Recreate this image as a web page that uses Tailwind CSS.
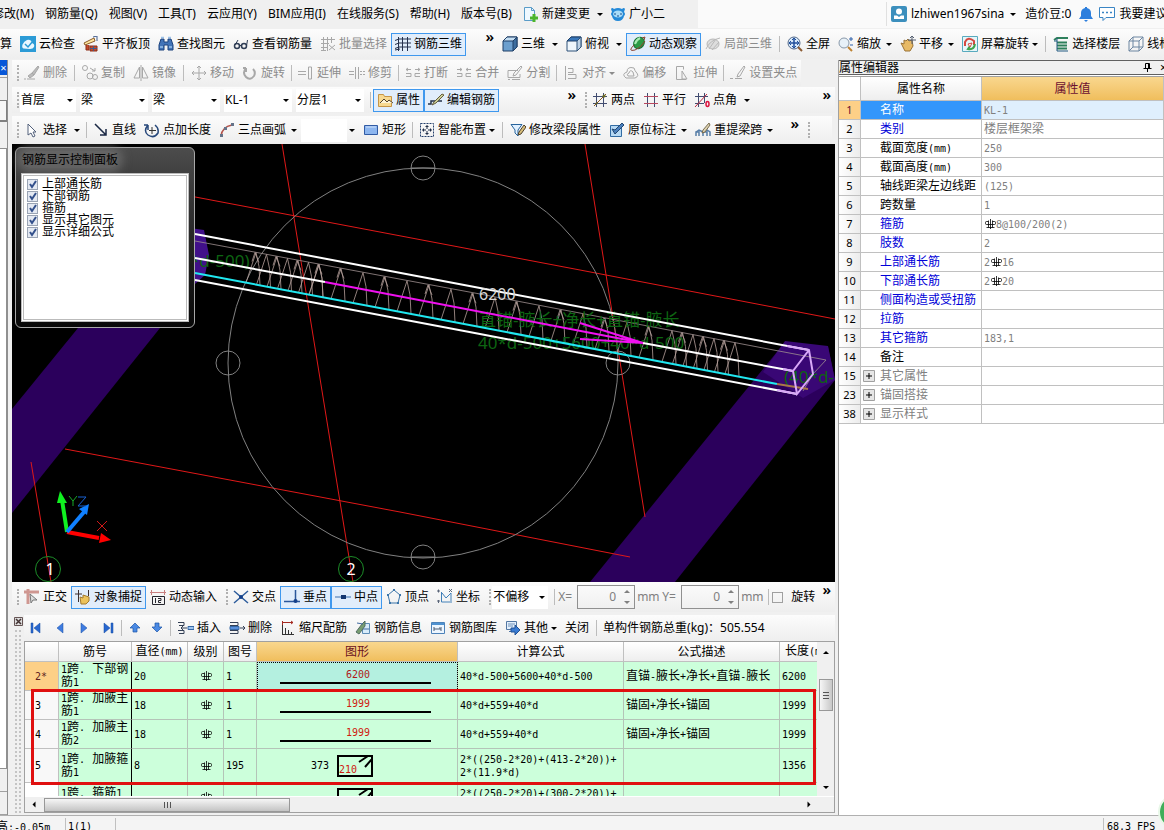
<!DOCTYPE html>
<html lang="zh-CN">
<head>
    <meta charset="UTF-8">
    <meta name="viewport" content="width=device-width, initial-scale=1.0">
    <title>钢筋三维</title>
    <script src="https://cdn.jsdelivr.net/npm/@tailwindcss/browser@4"></script>
</head>
<!-- Shared toolbar look: buttons, arrows (i), separators (hr), grips (s) and overflow marks (b) -->
<body class="h-screen flex flex-col overflow-hidden bg-[#f0f0f0] text-black text-[12px] leading-4 whitespace-nowrap font-['Noto_Sans','Noto_Sans_CJK_SC',sans-serif]
    [&_[role=toolbar]]:flex [&_[role=toolbar]]:items-center [&_[role=toolbar]]:shrink-0 [&_[role=toolbar]]:overflow-hidden [&_[role=toolbar]]:bg-linear-to-b [&_[role=toolbar]]:from-[#fcfcfc] [&_[role=toolbar]]:to-[#eeeeee]
    [&_[role=toolbar]>*]:shrink-0
    [&_[role=toolbar]_button]:flex [&_[role=toolbar]_button]:items-center [&_[role=toolbar]_button]:gap-[3px] [&_[role=toolbar]_button]:h-[23px] [&_[role=toolbar]_button]:px-[3px] [&_[role=toolbar]_button]:border [&_[role=toolbar]_button]:border-transparent
    [&_[role=toolbar]_button[aria-pressed=true]]:border-[#3f98ee] [&_[role=toolbar]_button[aria-pressed=true]]:bg-[#e1edfb]
    [&_[role=toolbar]_button:disabled]:text-[#8c8c8c]
    [&_[role=toolbar]_button_svg]:size-4 [&_[role=toolbar]_button_svg]:shrink-0 [&_[role=toolbar]_button_svg]:fill-none [&_[role=toolbar]_button_svg]:stroke-current
    [&_i]:border-x-[3px] [&_i]:border-x-transparent [&_i]:border-t-[3px] [&_i]:border-t-current
    [&_hr]:h-4 [&_hr]:w-px [&_hr]:mx-[3px] [&_hr]:border-0 [&_hr]:bg-[#bcbcbc]
    [&_s]:h-4 [&_s]:ml-[5px] [&_s]:mr-px [&_s]:border-l-2 [&_s]:border-dotted [&_s]:border-[#b0b0b0]
    [&_b]:ml-auto [&_b]:mr-1 [&_b]:self-start [&_b]:text-[15px] [&_b]:leading-[15px] [&_b]:font-semibold">

    <svg class="hidden">
        <symbol id="rebar" viewBox="0 0 12 12"><path d="M6.500 1v10M2.500 9.500h8M4.500 2.500v7M8.500 2.500v7M4.500 3.500h-2q-1 0-1 1v1q0 1 1 1h8q1 0 1-1v-1q0-1-1-1h-2" fill="none" stroke="currentColor" stroke-width=".8"/></symbol>
        <symbol id="plus" viewBox="0 0 12 12"><path d="M.5.5h11v11H.5z" fill="#e6e6e6" stroke="#a0a0a0"/><path d="M3 6h6M6 3v6" stroke="#000"/></symbol>
    </svg>

    <!-- Menu bar -->
    <header class="flex h-7 shrink-0 items-center">
        <nav class="flex w-[706px] h-full shrink-0 items-center gap-[11px] -ml-2 [&_button]:shrink-0">
            <button>修改(M)</button>
            <button>钢筋量(Q)</button>
            <button>视图(V)</button>
            <button>工具(T)</button>
            <button>云应用(Y)</button>
            <button>BIM应用(I)</button>
            <button>在线服务(S)</button>
            <button>帮助(H)</button>
            <button>版本号(B)</button>
            <button class="flex items-center gap-[3px]">
                <svg class="size-4" viewBox="0 0 16 16"><path d="M1.500 1.500h7l3 3v10h-10z" fill="#eef8ff" stroke="#5a9cc8"/><path d="M8.500 1.500v3h3" fill="none" stroke="#5a9cc8"/><path d="M9.500 8h3v2.500H15v3h-2.500V16h-3v-2.500H7v-3h2.500z" fill="#4cb52c"/></svg>
                新建变更 <i class="ml-1"></i>
            </button>
            <button class="flex items-center gap-[3px] -ml-1">
                <svg class="size-4" viewBox="0 0 16 16"><path d="M1 3q1-2 3 0 4-2 8 0 2-2 3 0l-1 3q2 2 0 4-1 5-6 5T2 10Q0 8 2 6z" fill="#2389d8"/><ellipse cx="8" cy="8" rx="5" ry="3.500" fill="#a7dbf8"/><path d="M5 7v2M11 7v2M7 10h2" stroke="#164d8c"/></svg>
                广小二
            </button>
        </nav>
        <div class="flex flex-1 h-full items-center bg-[#fafafa] pl-[188px] [&>*]:shrink-0">
            <span class="h-6 w-px bg-[#e0e0e0]"></span>
            <button class="flex items-center gap-1 ml-1">
                <svg class="size-4" viewBox="0 0 16 16"><rect width="16" height="16" rx="2" fill="#3c8fbd"/><circle cx="8" cy="5.500" r="3" fill="#fff"/><path d="M3 13V9.500h3l2 1.500 2-1.500h3V13z" fill="#fff"/></svg>
                lzhiwen1967sina <i class="ml-[2px]"></i>
            </button>
            <span class="ml-[9px]">造价豆:0</span>
            <button aria-label="通知" class="ml-[7px]"><svg class="size-4" viewBox="0 0 16 16"><path d="M7 1h2v1q4 1 4 5v3l2 3H1l2-3V7q0-4 4-5zM6 14h4l-2 2z" fill="#2d7fdd"/></svg></button>
            <button class="flex items-center gap-1 ml-[5px]">
                <svg class="size-4" viewBox="0 0 16 16"><path d="M.5 1.500h15v10H7l-3 3v-3H.5z" fill="#fff" stroke="#3a85c4"/><path d="M3 6.500h2m2 0h2m2 0h2" stroke="#3a85c4" stroke-width="1.500"/></svg>
                我要建议
            </button>
        </div>
    </header>

    <!-- View toolbar -->
    <div class="flex h-[31px] shrink-0 pt-px">
        <div role="toolbar" class="w-[498px]">
            <button class="-ml-1">算</button>
            <button><svg viewBox="0 0 16 16"><path d="M0 0h16v16H0z" fill="#2c9bd6" stroke="none"/><path d="M3.500 12.500q-2-1-1-4Q4 5 7 4q4-1 5 3 3 1 2 4-1 2-4 2z" fill="#e9f7ff" stroke="none"/><path d="m5 8 3 3 5-6" stroke="#2c9bd6" stroke-width="1.500"/></svg>云检查</button>
            <button><svg viewBox="0 0 16 16"><path d="m1 7 10-5 1 3-10 4z" fill="#ffe8a0" stroke="#8b5a28"/><path d="M3 9v5h3V9M7 10h7v5H7z" fill="#c54b2c" stroke="#8b2f18"/><path d="M7 12.500h7M10.500 10v5M10 1l4-1v5" stroke="#405c8c"/></svg>平齐板顶</button>
            <button><svg viewBox="0 0 16 16"><path d="M3 3h3v3h4V3h3l2 6v5h-5V9H6v5H1V9z" fill="#4274b8" stroke="#1c427c"/><path d="M3 1.500h3M10 1.500h3M2 11h3M11 11h3" stroke="#9cc3ea" stroke-width="1.500"/></svg>查找图元</button>
            <button><svg viewBox="0 0 16 16"><circle cx="4" cy="10" r="2.500" stroke="#2f3d55" stroke-width="1.500"/><circle cx="11" cy="10" r="2.500" stroke="#2f3d55" stroke-width="1.500"/><path d="M6.500 9.500h2M2 9l3-5M13.500 10l1-6" stroke="#2f3d55"/></svg>查看钢筋量</button>
            <button disabled><svg viewBox="0 0 16 16" class="text-[#a8a8a8]"><path d="M1 3.500h14M1 7.500h8M1 11.500h6M3.500 1v14M7.500 1v14M11.500 1v6M9 9l6 5M15 9l-6 5M1 14.500h5"/></svg>批量选择</button>
            <button aria-pressed="true"><svg viewBox="0 0 16 16" class="text-[#24304c]"><path d="M0 4.500 4 3h12M0 8.500 4 7h12M0 12.500l4-1.500h12M3.500 1v14M7.500 1v14M12.500 1v14M0 14l5-1"/></svg>钢筋三维</button>
            <b>»</b>
        </div>
        <div role="toolbar" class="flex-1">
            <button><svg viewBox="0 0 16 16"><path d="m1 5 4-4h10v10l-4 4H1z" fill="#6c9fce" stroke="#1f3f66"/><path d="m1 5 4-4h10l-4 4z" fill="#c5def2" stroke="#1f3f66"/><path d="M11 5v10l4-4V1z" fill="#3d6d9e" stroke="#1f3f66"/></svg>三维<i class="ml-1"></i></button>
            <button><svg viewBox="0 0 16 16"><path d="m1 5 4-4h10v10l-4 4H1z" fill="#eef5fb" stroke="#2d5178"/><path d="m1 5 4-4h10l-4 4z" fill="#3977ba" stroke="#1f3f66"/><path d="M11 5v10l4-4V1z" fill="#bdd1e5" stroke="#2d5178"/></svg>俯视<i class="ml-1"></i></button>
            <button aria-pressed="true"><svg viewBox="0 0 16 16"><ellipse cx="9" cy="7" rx="5" ry="6" transform="rotate(35 9 7)" fill="#2d9b46" stroke="#167033"/><path d="M10 2q-4 2-5 6" stroke="#a9ebb3" stroke-width="2"/><path d="M4 9q-7 7 1 5 6-2 10-9M12 2l3-1-1 3" stroke="#8c4230"/></svg>动态观察</button>
            <button disabled><svg viewBox="0 0 16 16" class="text-[#b8b8b8]"><ellipse cx="8" cy="8" rx="6" ry="5" fill="#ddd"/><path d="M1 13Q5 4 15 2M4 13l7-10M7 14l7-8"/></svg>局部三维</button>
            <hr>
            <button><svg viewBox="0 0 16 16"><circle cx="7" cy="7" r="6" fill="#d8eafa" stroke="#53698a"/><path d="M7 2v10M2 7h10" stroke="#204f9c" stroke-width="1.500"/><path d="m5 4 2-2 2 2M5 10l2 2 2-2M4 5 2 7l2 2M10 5l2 2-2 2" stroke="#204f9c"/><path d="m11 11 4 4" stroke="#8b5b33" stroke-width="2"/></svg>全屏</button>
            <button><svg viewBox="0 0 16 16"><circle cx="6" cy="7" r="5" fill="#e8f1f8" stroke="#8999aa"/><path d="m10 11 4 4" stroke="#bd8232" stroke-width="2"/><path d="M11 3h4M13 1v4M12 9h3" stroke="#2e60aa"/></svg>缩放<i class="ml-[2px]"></i></button>
            <button><svg viewBox="0 0 16 16"><path d="m1 7 3 1V4l2 1 2-2 1 2 3-1 1 6-3 5H5z" fill="#e8ba65" stroke="#9a7337"/><path d="M12 0v8M8 4h8M10 2l2-2 2 2" stroke="#555f70"/></svg>平移<i class="ml-[2px]"></i></button>
            <button><svg viewBox="0 0 16 16"><path d="M.5.5h15v15H.5z" fill="#e6f5f8" stroke="#58aabe"/><path d="M3 10V6q3-6 9-1v4" stroke="#d54a42" stroke-width="2"/><path d="M13 8q-1 6-7 5l2-3" stroke="#40a24b" stroke-width="2"/><path d="m6 8 4-1-2 4z" fill="#fff" stroke="#d54a42"/></svg>屏幕旋转<i></i></button>
            <hr>
            <button><svg viewBox="0 0 16 16"><path d="m1 4 3-2h11M4 6.500h10M4 9.500h10M4 12.500h10" stroke="#2e805c" stroke-width="2"/><path d="M4 2v13h11M1 5h3" stroke="#235a81"/></svg>选择楼层</button>
            <button><svg viewBox="0 0 16 16" class="text-[#6d86a1]"><path d="m1 5 4-4h10v10l-4 4H1zM1 5h10V15M11 5l4-4M5 1v10h10M5 11l-4 4"/></svg>线框</button>
        </div>
    </div>

    <div class="flex flex-1 min-h-0 pt-px">
        <!-- Collapsed side panel -->
        <aside class="flex w-2 shrink-0 flex-col border-r border-[#909090] overflow-hidden">
            <button aria-label="关闭" class="h-[15px] bg-[#0757d8] text-white text-[11px] leading-[15px]">×</button>
            <div class="h-[23px] border-t border-[#a0a0a0] mt-[2px]"></div>
            <div class="h-[22px] border border-l-0 border-b-2 border-[#808080] bg-[#f6f6f6]"></div>
            <div class="h-[26px]"></div>
            <div class="flex-1 border border-l-0 border-[#909090] bg-white"></div>
            <div class="h-[23px] border-b border-[#a0a0a0]"></div>
            <div class="h-[23px] border-b border-[#a0a0a0]"></div>
        </aside>

        <main class="flex flex-1 min-w-0 flex-col pl-1 pr-[3px]">
            <!-- Edit toolbar -->
            <div role="toolbar" class="h-[26px] self-start [&_svg]:text-[#a8a8a8]">
                <s></s>
                <button disabled><svg viewBox="0 0 16 16"><path d="m14 1-6 7 2 2 5-8zM8 8l-4 3 2 2 4-3" fill="#bbb"/><path d="M0 14h2m1 0h8"/></svg>删除</button><hr>
                <button disabled><svg viewBox="0 0 16 16"><circle cx="3" cy="3" r="2.500"/><circle cx="8" cy="11" r="3"/><circle cx="13" cy="12" r="2.500"/><path d="m8 3 5 3m0-3v3h-3"/></svg>复制</button>
                <button disabled><svg viewBox="0 0 16 16"><path d="M6.500 2v11H1zM9.500 2v11H15zM8 0v16"/></svg>镜像</button><hr>
                <button disabled><svg viewBox="0 0 16 16"><path d="M8 1v14M1 8h14M6 3l2-2 2 2M6 13l2 2 2-2M3 6 1 8l2 2M13 6l2 2-2 2"/></svg>移动</button>
                <button disabled><svg viewBox="0 0 16 16"><path d="M4 3Q0 8 4 12t8-1q2-4-1-7M4 3v4M4 3H1" stroke-width="2"/></svg>旋转</button><hr class="mx-[2px]!">
                <button disabled><svg viewBox="0 0 16 16"><path d="M0 6.500h8M0 9.500h8M10.500 2v12M13.500 2v12h-3V2z"/></svg>延伸</button>
                <button disabled><svg viewBox="0 0 16 16"><path d="M0 6.500h5M0 9.500h5M6.500 2v12M9.500 2v12M11 6.500h2m1 0h2M11 9.500h2m1 0h2"/></svg>修剪</button><hr class="mx-[2px]!">
                <button disabled><svg viewBox="0 0 16 16"><path d="M1 4.500h5M10 4.500h5M3 3 1 4.500 3 6M13 3l2 1.500L13 6M1 8.500h5v3H1M15 8.500h-5v3h5"/></svg>打断</button>
                <button disabled><svg viewBox="0 0 16 16"><path d="M1 4.500h5M10 4.500h5M4 3l2 1.500L4 6M12 3l-2 1.500L12 6M1 8.500h5v3H1M15 8.500h-5v3h5"/></svg>合并</button>
                <button disabled><svg viewBox="0 0 16 16"><path d="M11 5.500H1v7h12V9M14 1 7 8l-1 3 3-1 6-8zM1 14.500h2M5 14.500h8"/></svg>分割</button><hr class="mx-[2px]!">
                <button disabled><svg viewBox="0 0 16 16"><path d="M2.500 1v14M5 3.500h5v4H5M5 9.500h8v4H5"/></svg>对齐<i></i></button>
                <button disabled><svg viewBox="0 0 16 16"><path d="M3 13q-5-4 1-6 0-6 7-4 1 3 2 4 4 4-1 6zM5 11q-2-2 1-3 1-4 4-1l1 4z"/></svg>偏移</button>
                <button disabled><svg viewBox="0 0 16 16"><path d="M2.500 1.500h7v3M2.500 1.500v13H12M8 6l5 8H8z"/></svg>拉伸</button><hr class="mx-[2px]!">
                <button disabled><svg viewBox="0 0 16 16"><path d="m14 1-6 8-1 3 3-1 5-9zM0 13.500h3M5 13.500h7"/></svg>设置夹点</button>
            </div>

            <!-- Element toolbar -->
            <div class="flex h-[26px] shrink-0 mt-px mb-px [&_label]:flex [&_label]:items-center [&_label]:bg-white [&_label]:h-[23px] [&_label]:w-[68px] [&_label]:mr-1 [&_label]:pl-px [&_label]:pr-[3px] [&_select]:appearance-none [&_select]:flex-1 [&_select]:min-w-0">
                <div role="toolbar" class="w-[568px]">
                    <s class="mr-[5px]"></s>
                    <label class="w-[56px]!"><select aria-label="楼层"><option>首层</option></select><i></i></label>
                    <label><select aria-label="构件类别"><option>梁</option></select><i></i></label>
                    <label><select aria-label="构件类型"><option>梁</option></select><i></i></label>
                    <label><select aria-label="构件"><option>KL-1</option></select><i></i></label>
                    <label><select aria-label="分层"><option>分层1</option></select><i></i></label>
                    <hr class="mx-[2px]!">
                    <button aria-pressed="true"><svg viewBox="0 0 16 16"><path d="M1.500 2.500h5l1 2h7v10h-13z" fill="#f8d990" stroke="#c79545"/><path d="m3 11 4-4 3 3 2-2 4 3" fill="#fff4d5" stroke="#51432e"/></svg>属性</button>
                    <button aria-pressed="true"><svg viewBox="0 0 16 16"><path d="M0 12h3V9h11" stroke="#26334b" stroke-width="1.500"/><path d="m14 2-8 8-2 3 4-2 8-8z" fill="#cbd09b" stroke="#665d3c"/></svg>编辑钢筋</button>
                    <b>»</b>
                </div>
                <div role="toolbar" class="flex-1">
                    <s></s>
                    <button><svg viewBox="0 0 16 16"><path d="M1 4.500h14M1 11.500h14M4.500 1v14M11.500 1v14" stroke="#414c70"/><path d="M2 14 14 2" stroke="#8a5a20"/><circle cx="4.500" cy="11.500" r="1" fill="#6b6b20" stroke="none"/><circle cx="12" cy="4" r="1.500" fill="#6b6b20" stroke="none"/></svg>两点</button>
                    <button><svg viewBox="0 0 16 16"><path d="M4.500 1v14M11.500 1v14" stroke="#414c70"/><path d="M1 4.500h14M1 11.500h14" stroke="#b74860"/></svg>平行</button>
                    <button><svg viewBox="0 0 16 16"><path d="M1 4.500h13M1 11.500h9M4.500 1v14M10.500 1v10" stroke="#414c70"/><path d="M1 15 13 2" stroke="#c02b3e"/><ellipse cx="13.500" cy="12" rx="1.500" ry="2.500" stroke="#dc1440" stroke-width="1.500"/></svg>点角<i class="ml-1"></i></button>
                    <b>»</b>
                </div>
            </div>

            <!-- Drawing toolbar -->
            <div class="flex h-7 shrink-0 mt-[2px]">
                <div role="toolbar" class="w-[791px]">
                    <s></s>
                    <button><svg viewBox="0 0 16 16"><path d="m4 2 8 8H9l2 4-2 1-2-4-3 2z" fill="#fff" stroke="#52607b"/></svg>选择<i class="ml-1"></i></button><hr class="mx-[2px]!">
                    <button><svg viewBox="0 0 16 16"><path d="m2 2 11 11M13 7v6H7" stroke="#1b2945" stroke-width="1.500"/></svg>直线</button>
                    <button><svg viewBox="0 0 16 16"><path d="M4 3Q-1 9 4 13q6 4 10-2 1-5-3-8M4 3v5M4 3H0" stroke="#26477a" stroke-width="1.500"/><path d="M8 5v7M5 8.500h7" stroke="#333"/></svg>点加长度</button>
                    <button><svg viewBox="0 0 16 16"><path d="M2 14Q3 5 13 3" stroke="#b5544c" stroke-width="1.500"/><path d="M1 12h3v3H1zM5 5h3v3H5zM12 1h3v3h-3z" fill="#657389" stroke="none"/></svg>三点画弧<i class="ml-[2px]"></i></button>
                    <label class="flex h-[23px] w-[54px] items-center"><select aria-label="画弧方式" class="flex-1 min-w-0 h-full appearance-none bg-white mr-[2px]"><option></option></select><i></i></label>
                    <button class="ml-1"><svg viewBox="0 0 16 16"><path d="M1.500 3.500h13v9h-13z" fill="#8db6ef" stroke="#315ba4"/><path d="M3 5h10" stroke="#cfe1fa"/></svg>矩形</button><hr class="mx-[2px]!">
                    <button><svg viewBox="0 0 16 16"><path d="M1.500 1.500h13v13h-13z" stroke="#25406c" stroke-dasharray="2 1"/><path d="M8 3v4M8 9v4M3 8h4M9 8h4M6.500 4.500h3M6.500 11.500h3M4.500 6.500v3M11.500 6.500v3" stroke="#1e2d47"/></svg>智能布置<i></i></button><hr>
                    <button><svg viewBox="0 0 16 16"><path d="M1 2.500h11L8 8v6l-3-3V8z" fill="#e0f0ff" stroke="#27649d"/><path d="m14 3-5 7-1 3 3-1 5-7z" fill="#d7bd78" stroke="#4b4030"/></svg>修改梁段属性</button>
                    <button><svg viewBox="0 0 16 16"><path d="M1.500 3.500h11v11h-11z" fill="#b6d8f3" stroke="#316ba3"/><path d="m13 1-7 7-3-1 3 5 9-9z" fill="#4b80bd" stroke="#214671"/></svg>原位标注<i class="ml-[2px]"></i></button>
                    <button><svg viewBox="0 0 16 16"><path d="M1 14v-4h3v4M8 14v-4h4v4M1 10l3-2 4 2 4-2 3 2v4" stroke="#567da7" stroke-width="1.500"/><path d="m14 1-6 7-1 3 3-1 5-7z" fill="#ddd2b1" stroke="#786c50"/></svg>重提梁跨<i class="ml-[2px]"></i></button>
                    <b>»</b>
                </div>
                <div role="toolbar" class="w-[29px]"><s></s></div>
            </div>

            <!-- 3D view -->
            <section class="relative flex-1 min-h-0 overflow-hidden bg-black">
                <svg class="block w-full h-full" viewBox="12 144 823 438" preserveAspectRatio="xMinYMin slice" fill="none">
                    <path d="M78 328h82L12 513V409z" fill="#2b005c"/>
                    <path d="m785 342 43 5 7 33L675 582h-85z" fill="#2b005c"/>
                    <path d="m785 341 43 5 7 34-32 18-40-26z" fill="#390775"/>
                    <path d="m190 228 14 2 5 25-4 20-10 9-5-2z" fill="#41108a"/>
                    <path d="m282 144 71 438M585 144l60 373M190 196l290 55 100 19 255 49M65 449l335 63 230 45M31 462l20 120" stroke="#e01818"/>
                    <g stroke="#808080">
                        <circle cx="423" cy="363" r="195"/>
                        <circle cx="423" cy="168" r="12"/><circle cx="423" cy="557" r="12"/><circle cx="228" cy="363" r="12"/><circle cx="618" cy="363" r="12"/>
                        <path d="M411 168h24M411 557h24"/>
                    </g>
                    <path id="stirrups" stroke="#b5a09a" stroke-width=".8"/>
                    <path d="m195 241 285 53 346 66-13 14-10 17" stroke="#a09090" stroke-width=".8"/>
                    <g font-size="17" fill="#0d6412">
                        <text x="190" y="267">*d-500)</text>
                        <text x="479" y="326">直锚-腋长+净长+直锚-腋长</text>
                        <text x="478" y="349">40*d-500+5600+40*d-500</text>
                        <text x="784" y="383">(40*d-</text>
                    </g>
                    <g stroke-width="2">
                        <path d="m195 234 285 54 329 62M195 280l285 54 317 60M195 258l130 24M643 343l150 28" stroke="#fff"/>
                        <path d="m195 273 285 54 297 57" stroke="#20e8f0"/>
                        <path d="m325 282 318 61M580 323l63 20-63-4" stroke="#f010f0"/>
                        <path d="m777 384 31 5" stroke="#a87848"/>
                        <path d="m787 346 22 4 4 24-16 20-4-23 16-21M797 394l-20-4M793 371l-10-2" stroke="#d8a8f8"/>
                    </g>
                    <text x="479" y="300" font-size="16" fill="#d8d8d8">6200</text>
                    <!-- Axis bubbles -->
                    <g stroke="#1c8c28"><circle cx="48" cy="569" r="12.500"/><circle cx="351" cy="569" r="12.500"/></g>
                    <g font-size="16" fill="#fff" text-anchor="middle"><text x="50" y="575">1</text><text x="351" y="575">2</text></g>
                    <!-- Coordinate axes -->
                    <path d="m67 532-5-32" stroke="#10f020" stroke-width="4"/><path d="m60 491 7 12h-10z" fill="#10f020"/>
                    <path d="m67 532 32 6" stroke="#f00" stroke-width="4"/><path d="m111 540-12 3 2-10z" fill="#f00"/>
                    <path d="m67 532 17-20" stroke="#1080ff" stroke-width="4"/><path d="m89 504-2 11-8-6z" fill="#1080ff"/>
                    <path d="m69 496 4 5 4-5M73 501v5" stroke="#18a828"/><path d="M78 497h8l-8 9h8" stroke="#1860d0"/><path d="m97 521 10 10M107 521l-10 10" stroke="#d01818"/>
                </svg>

                <div class="absolute left-[3px] top-[3px] w-[180px] h-[181px] flex flex-col rounded-md border border-[#a8a8a8] bg-linear-to-b from-[#4c4c4c] via-[#343434] via-30% to-[#080808] px-[5px] pb-[5px]">
                    <h2 class="h-[25px] leading-6 pl-px text-black"><span class="bg-[#777]/60 shadow-[0_0_8px_5px_#77777799] rounded-lg">钢筋显示控制面板</span></h2>
                    <div class="flex-1 border-3 border-double border-[#bbb] bg-white pl-[3px] pt-[2px] text-[12px] leading-3 [&_label]:flex [&_label]:h-3 [&_label]:items-center [&_label]:gap-1 [&_input]:appearance-none [&_input]:size-[11px] [&_input]:border [&_input]:border-[#9aa4b4] [&_input]:bg-[#e4e9f2] [&_span]:flex [&_svg]:-ml-[11px] [&_svg]:pointer-events-none">
                        <label><span><input type="checkbox" checked><svg width="11" height="11" viewBox="0 0 11 11"><path d="m3 5 2 3 4-6" fill="none" stroke="#33508c" stroke-width="2"/></svg></span>上部通长筋</label>
                        <label><span><input type="checkbox" checked><svg width="11" height="11" viewBox="0 0 11 11"><path d="m3 5 2 3 4-6" fill="none" stroke="#33508c" stroke-width="2"/></svg></span>下部钢筋</label>
                        <label><span><input type="checkbox" checked><svg width="11" height="11" viewBox="0 0 11 11"><path d="m3 5 2 3 4-6" fill="none" stroke="#33508c" stroke-width="2"/></svg></span>箍筋</label>
                        <label><span><input type="checkbox" checked><svg width="11" height="11" viewBox="0 0 11 11"><path d="m3 5 2 3 4-6" fill="none" stroke="#33508c" stroke-width="2"/></svg></span>显示其它图元</label>
                        <label><span><input type="checkbox" checked><svg width="11" height="11" viewBox="0 0 11 11"><path d="m3 5 2 3 4-6" fill="none" stroke="#33508c" stroke-width="2"/></svg></span>显示详细公式</label>
                    </div>
                </div>
            </section>

            <!-- Snap toolbar -->
            <div role="toolbar" class="h-[30px]">
                <s></s>
                <button><svg viewBox="0 0 16 16"><path d="M0 3h15M4 0v15" stroke="#cf9791" stroke-width="3"/><path d="m6 5 7 6H9l-2 3z" fill="#ddd" stroke="#777"/></svg>正交</button>
                <button aria-pressed="true"><svg viewBox="0 0 16 16"><path d="M3.500 1v12M0 5h7M13.500 1v6" stroke="#3c2f2f"/><path d="m5 8 3 1V6l6 2v4l-3 3H6z" fill="#ecc35c" stroke="#a37b31"/></svg>对象捕捉</button>
                <button><svg viewBox="0 0 16 16"><path d="M0 3.500h16M1.500 1v5M14.500 1v5" stroke="#c98080"/><path d="M2.500 7.500h12v8h-12zM5.500 9v5M8 9.500h3v2H8.500v2H11" stroke="#26262e"/></svg>动态输入</button>
                <s class="mr-[5px]"></s>
                <button><svg viewBox="0 0 16 16"><path d="m1 2 14 12M15 2 1 14" stroke="#2e5d9c" stroke-width="1.500"/><circle cx="8" cy="8" r="2" fill="#15408a" stroke="none"/></svg>交点</button>
                <button aria-pressed="true"><svg viewBox="0 0 16 16"><path d="M0 12.500h16M11.500 1v12" stroke="#2b579b" stroke-width="1.500"/><circle cx="11.500" cy="12" r="2" fill="#15408a" stroke="none"/></svg>垂点</button>
                <button aria-pressed="true"><svg viewBox="0 0 16 16"><path d="M0 8h16" stroke="#3b70b0"/><path d="M6 6h5v4H6z" fill="#14366f" stroke="none"/></svg>中点</button>
                <button><svg viewBox="0 0 16 16"><path d="m8 1 6 5-2 8H4L2 6z" stroke="#3b75a9"/><path d="M7 0h2v2H7zM1 5h2v2H1zM13 5h2v2h-2zM3 13h2v2H3zM11 13h2v2h-2z" fill="#3b75a9" stroke="none"/></svg>顶点</button>
                <button><svg viewBox="0 0 16 16"><path d="M4.500 3v10H15M5 4l4 5 5-5v8" stroke="#4280b8"/><path d="M0 2h3M1.500.500v3M0 12h3M1.500 11v3M12 0l3 3M15 0l-3 3" stroke="#5a6578"/></svg>坐标</button>
                <s class="mr-[5px]"></s>
                <label class="flex h-[23px] w-[56px] items-center bg-white pl-px pr-[3px]"><select aria-label="偏移方式" class="flex-1 min-w-0 appearance-none"><option>不偏移</option></select><i></i></label>
                <hr class="ml-[6px]!">
                <label for="offX" class="w-[19px] text-[#808080]">X=</label>
                <span class="flex h-6 w-[58px] items-center border border-[#909090] text-[#808080]"><input id="offX" value="0" class="w-[38px] text-right"><span class="ml-auto mr-1 flex flex-col gap-2"><i class="rotate-180"></i><i></i></span></span>
                <span class="w-[27px] pl-[2px] text-[#808080]">mm</span>
                <label for="offY" class="w-[19px] text-[#808080]">Y=</label>
                <span class="flex h-6 w-[58px] items-center border border-[#909090] text-[#808080]"><input id="offY" value="0" class="w-[38px] text-right"><span class="ml-auto mr-1 flex flex-col gap-2"><i class="rotate-180"></i><i></i></span></span>
                <span class="w-[26px] pl-[2px] text-[#808080]">mm</span>
                <hr>
                <label class="flex items-center gap-2"><input type="checkbox" class="appearance-none size-[11px] border border-[#a0a0a0]">旋转</label>
                <b>»</b>
            </div>

            <!-- Rebar editor -->
            <section class="flex shrink-0 mt-[3px] pb-[2px]">
                <div class="w-3 shrink-0 flex flex-col items-center pt-[2px]">
                    <button aria-label="关闭面板"><svg width="9" height="9" viewBox="0 0 9 9"><path d="M.5.5h8v8h-8z" fill="#ddd" stroke="#655"/><path d="m2 2 5 5M7 2 2 7" stroke="#433" stroke-width="1.500"/></svg></button>
                    <div class="flex-1 mt-1 w-[6px] border-x-2 border-dotted border-[#c4c4c4]"></div>
                </div>
                <div class="flex-1 min-w-0">
                    <div role="toolbar" class="h-[26px]">
                        <button aria-label="首条"><svg viewBox="0 0 16 16"><path d="M3 3h2v10H3zM12 3v10L6 8z" fill="#2867cf" stroke="#164da2" stroke-width=".5"/></svg></button>
                        <button aria-label="上一条"><svg viewBox="0 0 16 16"><path d="M11 3v10L5 8z" fill="#3f7ce0" stroke="#164da2" stroke-width=".5"/></svg></button>
                        <button aria-label="下一条"><svg viewBox="0 0 16 16"><path d="M5 3v10l6-5z" fill="#3f7ce0" stroke="#164da2" stroke-width=".5"/></svg></button>
                        <button aria-label="末条"><svg viewBox="0 0 16 16"><path d="M11 3h2v10h-2zM4 3v10l6-5z" fill="#2867cf" stroke="#164da2" stroke-width=".5"/></svg></button>
                        <hr class="mx-px!">
                        <button aria-label="上移" class="w-[22px]"><svg viewBox="0 0 16 16"><path d="m8 3 5 5h-3v4H6V8H3z" fill="#4b8ae4" stroke="#1b54a8" stroke-width=".7"/></svg></button>
                        <button aria-label="下移" class="w-[22px]"><svg viewBox="0 0 16 16"><path d="m8 12 5-5h-3V3H6v4H3z" fill="#4b8ae4" stroke="#1b54a8" stroke-width=".7"/></svg></button>
                        <hr>
                        <button><svg viewBox="0 0 16 16"><path d="M0 2.500h6v3H1M0 10.500h6v3H1M3 8h6M5 6 3 8l2 2" stroke="#333f55"/><path d="M10 6.500h6v3h-6z" fill="#9fc5f0" stroke="#3567a5"/></svg>插入</button>
                        <button><svg viewBox="0 0 16 16"><path d="M1 2.500h8v3H1M1 10.500h8v3H1M11 8h5M14 6l2 2-2 2" stroke="#333f55"/><path d="M1 6.500h9v3H1z" fill="#5890dd" stroke="#3567a5"/></svg>删除</button>
                        <button><svg viewBox="0 0 16 16"><path d="M2.500 5v10M5.500 8v7M8.500 10v5M11.500 12v3M2 14.500h12" stroke="#333"/><path d="M2 2.500h11M11 1l2 1.500L11 4M2.500 1v4" stroke="#a52b22"/></svg>缩尺配筋</button>
                        <button><svg viewBox="0 0 16 16"><path d="M7.500 3.500h7v10h-7z" fill="#d8ecfa" stroke="#5d8cb6"/><path d="m1 12 6-8 3-3v5l-6 8z" fill="#789d72" stroke="#526e62"/><path d="m2 3 6 1M8 9h6" stroke="#426ba0"/></svg>钢筋信息</button>
                        <button><svg viewBox="0 0 16 16"><path d="M1.500 2.500h13v11h-13z" fill="#edf6ff" stroke="#4d82b9"/><path d="M2 4h12" stroke="#4f92d0" stroke-width="2"/><path d="M4 7v4M4 9h7v2M9 8h3" stroke="#4b5a70"/></svg>钢筋图库</button>
                        <button><svg viewBox="0 0 16 16"><path d="M1.500 1.500h10v8h-10zM4 11.500h4" fill="#e3effc" stroke="#5478a3"/><path d="M3 4h7M3 6h5" stroke="#6e91b9"/><path d="M6 8h4V5l5 5-5 5v-3H6z" fill="#397bd2" stroke="#215194"/></svg>其他<i></i></button>
                        <button>关闭</button>
                        <hr>
                        <span class="pl-[3px]">单构件钢筋总重(kg)：505.554</span>
                    </div>

                    <div class="border border-[#a0a0a0] bg-[#f0f0f0]">
                        <div class="relative flex h-[154px]">
                            <div class="flex-1 min-w-0 overflow-hidden bg-white">
                                <table class="table-fixed w-[811px] border-separate border-spacing-0 text-left leading-3 font-['DejaVu_Sans_Mono','Noto_Sans_CJK_SC',monospace] [&_td]:border-r [&_td]:border-b [&_td]:border-[#b4c4b8] [&_td]:bg-[#ccffdb] [&_td]:pl-[2px] [&_th]:border-r [&_th]:border-b [&_th]:border-[#c0c0c0] [&_th]:font-normal [&_td:nth-child(2)]:border-r-black [&_span]:text-[10px]">
                                    <colgroup><col class="w-[34px]"><col class="w-[73px]"><col class="w-[56px]"><col class="w-[36px]"><col class="w-[33px]"><col class="w-[201px]"><col class="w-[166px]"><col class="w-[156px]"><col class="w-[56px]"></colgroup>
                                    <thead>
                                        <tr class="h-5 text-center [&_th]:bg-linear-to-b [&_th]:from-white [&_th]:to-[#eee]">
                                            <th></th><th>筋号</th><th>直径<span>(mm)</span></th><th>级别</th><th>图号</th>
                                            <th class="from-[#f9d78e]! to-[#f0be5c]! text-[#6b1020]">图形</th>
                                            <th>计算公式</th><th>公式描述</th><th class="text-left pl-[5px]">长度<span>(mm)</span></th>
                                        </tr>
                                    </thead>
                                    <tbody>
                                        <tr class="h-[29px]">
                                            <th class="bg-[#fdd087] pl-[10px] text-[#602020]"><span>2*</span></th>
                                            <td><span>1</span>跨<span>.</span> 下部钢<br>筋<span>1</span></td><td><span>20</span></td>
                                            <td><svg class="ml-[10px] size-3"><use href="#rebar"/></svg></td><td><span>1</span></td>
                                            <td class="bg-[#b4f0e0]! outline-1 outline-dotted -outline-offset-1 outline-black text-center text-[#b01818]"><span>6200</span><div class="ml-[21px] mt-px h-[2px] w-[151px] bg-black"></div></td>
                                            <td><span>40*d-500+5600+40*d-500</span></td><td>直锚<span>-</span>腋长<span>+</span>净长<span>+</span>直锚<span>-</span>腋长</td><td><span>6200</span></td>
                                        </tr>
                                        <tr class="h-[29px]">
                                            <th class="bg-[#f8f8f8] pl-[10px]"><span>3</span></th>
                                            <td><span>1</span>跨<span>.</span> 加腋主<br>筋<span>1</span></td><td><span>18</span></td>
                                            <td><svg class="ml-[10px] size-3"><use href="#rebar"/></svg></td><td><span>1</span></td>
                                            <td class="text-center text-[#d02010]"><span>1999</span><div class="ml-[21px] mt-px h-[2px] w-[151px] bg-black"></div></td>
                                            <td><span>40*d+559+40*d</span></td><td>锚固<span>+</span>净长<span>+</span>锚固</td><td><span>1999</span></td>
                                        </tr>
                                        <tr class="h-[29px]">
                                            <th class="bg-[#f8f8f8] pl-[10px]"><span>4</span></th>
                                            <td><span>1</span>跨<span>.</span> 加腋主<br>筋<span>2</span></td><td><span>18</span></td>
                                            <td><svg class="ml-[10px] size-3"><use href="#rebar"/></svg></td><td><span>1</span></td>
                                            <td class="text-center text-[#d02010]"><span>1999</span><div class="ml-[21px] mt-px h-[2px] w-[151px] bg-black"></div></td>
                                            <td><span>40*d+559+40*d</span></td><td>锚固<span>+</span>净长<span>+</span>锚固</td><td><span>1999</span></td>
                                        </tr>
                                        <tr class="h-[34px]">
                                            <th class="bg-[#f8f8f8] pl-[10px]"><span>5</span></th>
                                            <td><span>1</span>跨<span>.</span> 加腋箍<br>筋<span>1</span></td><td><span>8</span></td>
                                            <td><svg class="ml-[10px] size-3"><use href="#rebar"/></svg></td><td><span>195</span></td>
                                            <td>
                                                <div class="flex items-center gap-2 pl-[52px]"><span>373</span><svg width="36" height="24" viewBox="0 0 36 24"><path d="M1 2h34v20H1zM22 8l9-6M28 13l7-8" fill="none" stroke="#000" stroke-width="2"/><text x="2" y="19" font-size="10" fill="#d02010">210</text></svg></div>
                                            </td>
                                            <td><span>2*((250-2*20)+(413-2*20))+<br>2*(11.9*d)</span></td><td></td><td><span>1356</span></td>
                                        </tr>
                                        <tr class="h-[34px] align-top">
                                            <th class="bg-white"></th>
                                            <td class="pt-1"><span>1</span>跨<span>.</span> 箍筋<span>1</span></td><td></td>
                                            <td class="pt-2"><svg class="ml-[10px] size-3"><use href="#rebar"/></svg></td><td></td>
                                            <td class="pt-1">
                                                <div class="flex items-center pl-[78px]"><svg width="36" height="24" viewBox="0 0 36 24"><path d="M1 2h34v20H1zM22 8l9-6M28 13l7-8" fill="none" stroke="#000" stroke-width="2"/></svg></div>
                                            </td>
                                            <td class="pt-1"><span>2*((250-2*20)+(300-2*20))+<br>2*(11.9*d)</span></td><td></td><td></td>
                                        </tr>
                                    </tbody>
                                </table>
                            </div>
                            <!-- Vertical scroll bar -->
                            <div class="flex w-[17px] shrink-0 flex-col items-center pt-[9px] pb-[7px]">
                                <i class="rotate-180"></i>
                                <div class="mt-[25px] flex h-8 w-[14px] flex-col items-center justify-center gap-[2px] border border-[#989898] bg-linear-to-r from-[#f6f6f6] to-[#c8c8c8]"><div class="h-px w-[6px] bg-[#555]"></div><div class="h-px w-[6px] bg-[#555]"></div><div class="h-px w-[6px] bg-[#555]"></div></div>
                                <i class="mt-auto"></i>
                            </div>
                            <!-- Highlight around the haunch rebar rows -->
                            <div class="absolute left-[6px] right-[18px] top-[47px] h-[96px] border-3 border-[#e01010] pointer-events-none"></div>
                        </div>
                        <!-- Horizontal scroll bar -->
                        <div class="flex h-4 items-center border-t border-white pl-[6px] pr-[22px]">
                            <i class="rotate-90"></i>
                            <div class="ml-[7px] flex h-[14px] w-[246px] items-center justify-center gap-[2px] border border-[#989898] bg-linear-to-b from-[#f6f6f6] to-[#c4c4c4]"><div class="h-[6px] w-px bg-[#555]"></div><div class="h-[6px] w-px bg-[#555]"></div><div class="h-[6px] w-px bg-[#555]"></div></div>
                            <i class="ml-auto -rotate-90"></i>
                        </div>
                    </div>
                </div>
            </section>
        </main>

        <!-- Property editor -->
        <aside class="flex w-[326px] shrink-0 flex-col overflow-hidden border-l border-[#a0a0a0] bg-white">
            <div class="flex h-[15px] shrink-0 items-center border-y border-[#606060] bg-[#f0f0f0]">
                <h2 class="leading-[13px]">属性编辑器</h2>
                <svg class="ml-auto mr-[8px]" width="9" height="9" viewBox="0 0 9 9"><path d="M2.500 5V.500h4V5M.500 5.500h8M4.500 5.500V9M5.500.500V5" fill="none" stroke="#000"/></svg>
                <span class="w-1 overflow-hidden leading-[13px]">×</span>
            </div>
            <table class="mt-px w-full table-fixed border-separate border-spacing-0 border-t border-[#a0a0a0] text-left leading-4 font-['DejaVu_Sans_Mono','Noto_Sans_CJK_SC',monospace] [&_th]:font-normal [&_th]:text-center [&_th]:border-r [&_th]:border-b [&_th]:border-[#c0c0c0] [&_td]:border-r [&_td]:border-b [&_td]:border-[#c0c0c0] [&_tbody_tr]:h-[19px] [&_tbody_th]:text-[11px] [&_tbody_th]:font-['Noto_Sans'] [&_tbody_th]:bg-linear-to-r [&_tbody_th]:from-white [&_tbody_th]:to-[#ececec] [&_td:nth-child(2)]:pl-[19px] [&_td:last-child]:pl-[2px] [&_td:last-child]:text-[#808080] [&_span]:text-[10px]">
                <colgroup><col class="w-[22px]"><col class="w-[121px]"><col></colgroup>
                <thead>
                    <tr class="h-6"><th></th><th class="bg-linear-to-b from-white to-[#eee]">属性名称</th><th class="bg-linear-to-b from-[#f9d78e] to-[#f0be5c] text-[#6b1030]">属性值</th></tr>
                </thead>
                <tbody>
                    <tr><th class="from-[#fdd087]! to-[#fdd087]! text-[#6b1030]">1</th><td class="bg-[#3396fb] text-white">名称</td><td class="bg-[#dfeffd]"><span>KL-1</span></td></tr>
                    <tr><th>2</th><td class="text-[#0000d8]">类别</td><td>楼层框架梁</td></tr>
                    <tr><th>3</th><td>截面宽度<span>(mm)</span></td><td><span>250</span></td></tr>
                    <tr><th>4</th><td>截面高度<span>(mm)</span></td><td><span>300</span></td></tr>
                    <tr><th>5</th><td>轴线距梁左边线距</td><td><span>(125)</span></td></tr>
                    <tr><th>6</th><td>跨数量</td><td><span>1</span></td></tr>
                    <tr><th>7</th><td class="text-[#0000d8]">箍筋</td><td><svg class="inline size-3 text-black"><use href="#rebar"/></svg><span>8@100/200(2)</span></td></tr>
                    <tr><th>8</th><td class="text-[#0000d8]">肢数</td><td><span>2</span></td></tr>
                    <tr><th>9</th><td class="text-[#0000d8]">上部通长筋</td><td><span>2</span><svg class="inline size-3 text-black"><use href="#rebar"/></svg><span>16</span></td></tr>
                    <tr><th>10</th><td class="text-[#0000d8]">下部通长筋</td><td><span>2</span><svg class="inline size-3 text-black"><use href="#rebar"/></svg><span>20</span></td></tr>
                    <tr><th>11</th><td class="text-[#0000d8]">侧面构造或受扭筋</td><td></td></tr>
                    <tr><th>12</th><td class="text-[#0000d8]">拉筋</td><td></td></tr>
                    <tr><th>13</th><td class="text-[#0000d8]">其它箍筋</td><td><span>183,1</span></td></tr>
                    <tr><th>14</th><td>备注</td><td></td></tr>
                    <tr><th>15</th><td class="pl-[2px]! text-[#808080]"><div class="flex items-center gap-[5px]"><svg class="size-3"><use href="#plus"/></svg>其它属性</div></td><td></td></tr>
                    <tr><th>23</th><td class="pl-[2px]! text-[#808080]"><div class="flex items-center gap-[5px]"><svg class="size-3"><use href="#plus"/></svg>锚固搭接</div></td><td></td></tr>
                    <tr><th>38</th><td class="pl-[2px]! text-[#808080]"><div class="flex items-center gap-[5px]"><svg class="size-3"><use href="#plus"/></svg>显示样式</div></td><td></td></tr>
                </tbody>
            </table>
        </aside>
    </div>

    <!-- Status bar -->
    <footer class="relative flex h-[15px] shrink-0 border-t border-[#b0b0b0] bg-[#f4f4f4] pt-[2px] text-[10px] leading-[18px] font-['DejaVu_Sans_Mono','Noto_Sans_CJK_SC',monospace]">
        <div class="w-[66px] shrink-0 border-r border-[#c0c0c0]"><span class="-ml-1 text-[12px]">高</span>:-0.05m</div>
        <div class="w-[50px] shrink-0 border-r border-[#c0c0c0] pl-[2px]">1(1)</div>
        <div class="flex-1 border-r border-[#c0c0c0]"></div>
        <div class="w-[60px] shrink-0 pl-[3px]">68.3 FPS</div>
        <div class="absolute -right-[30px] -top-[22px] size-9 rounded-full border-2 border-[#e8f8e8] bg-[#3fae5a]"></div>
    </footer>

    <script>
        // Stirrups along the beam: close spacing at both ends, wide in the middle
        const tops = [];
        for (let x = 256; x < 320; x += 10.5) tops.push(x);
        for (let x = 319; x < 660; x += 22) tops.push(x);
        for (let x = 672; x < 738; x += 10.5) tops.push(x);
        const topY = x => 241 + (x - 195) * 0.188;
        const bottomY = x => 273 + (x - 195) * 0.19;
        document.getElementById('stirrups').setAttribute('d', tops.map((x, i) => {
            const hook = i % 2 ? '' : `M${x - 4} ${topY(x) + 9}L${x - 1} ${topY(x)}L${x + 3} ${topY(x) + 10}`;
            return `M${x - 10} ${bottomY(x - 10)}L${x} ${topY(x)}L${x + 3} ${topY(x) + 14}L${x + 4} ${bottomY(x + 4)}${hook}`;
        }).join(''));
    </script>
</body>
</html>
